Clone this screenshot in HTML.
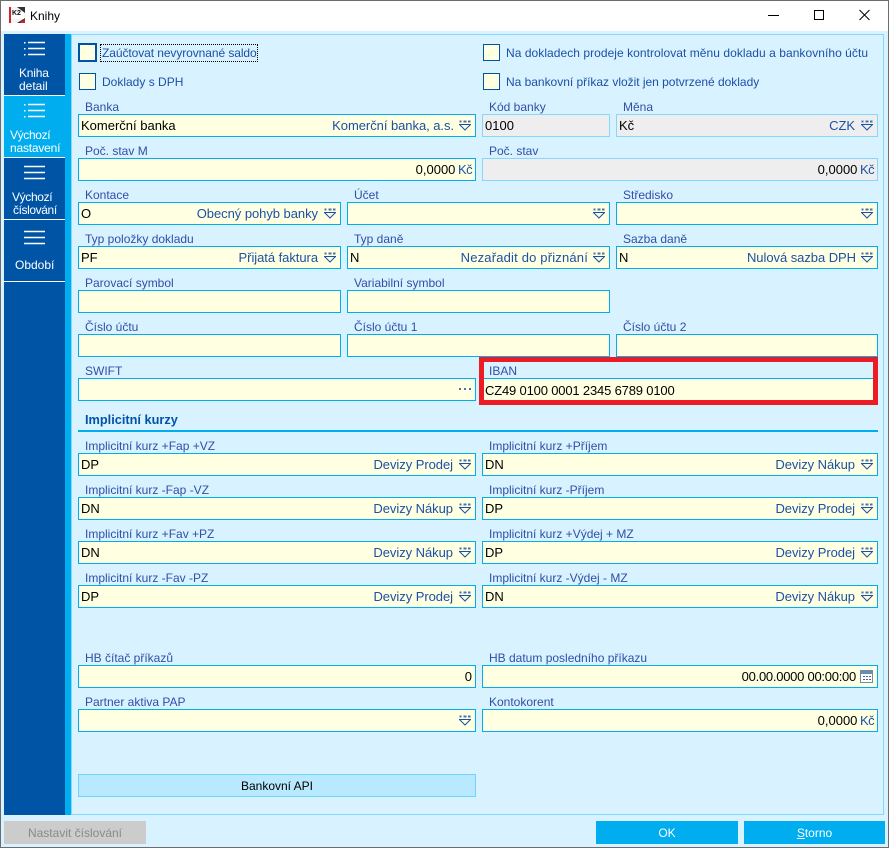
<!DOCTYPE html>
<html><head><meta charset="utf-8">
<style>
html,body{margin:0;padding:0;background:#fff}
body{width:889px;height:848px;position:relative;overflow:hidden;font:12px/16px "Liberation Sans",sans-serif;color:#000}
div,span,svg{position:absolute;box-sizing:border-box;white-space:nowrap}
.l{color:#2f4fa8;height:16px}
.f{height:23px;background:#ffffe1;border:1px solid #00aeef;font-size:13px}
.f.d{background:#eee;border-color:#84d8ff}
.t{left:2px;top:3px;color:#000}
.r{right:3px;top:3px;color:#000}
.b{color:#1c50a8;letter-spacing:-.05px}
.s{position:static;color:#1c50a8;letter-spacing:-.6px;margin-left:-1px}
.c{right:4px;top:5px;width:12px;height:12px}
.cb{width:17px;height:17px;left:0;background:#ffffe1;border:1px solid #0054a6}
.ct{color:#1c50a8;height:16px}
.side{left:4px;width:61px;height:61px;background:#0054a6;color:#fff;line-height:13px;font-size:12px}
.side svg{left:20px;width:21px;height:15px}
.btn{background:#00aeef;color:#fff;text-align:center;line-height:24px;height:23px}
</style></head><body>
<svg width="0" height="0" style="left:0;top:0"><defs>
<g id="ch"><path d="M0.500 0.500h2v2h-2zM4.500 0.500h3v2h-3zM9 0.500h2.500v2h-2.500z" fill="#4a70b0"/><path d="M0 4.500h12M0.500 4.500l5.500 5.500 5.500-5.500" fill="none" stroke="#1c50a8" stroke-width="1"/></g>
<g id="hb"><path d="M0 1.500h21M0 7.500h21M0 13.500h21" stroke="#fff" stroke-width="1.400"/></g>
<g id="hd"><path d="M4 1.500h17M4 7.500h17M4 13.500h17" stroke="#fff" stroke-width="1.400"/><path d="M0 1h1.500v1.500h-1.500zM0 7h1.500v1.500h-1.500zM0 13h1.500v1.500h-1.500z" fill="#fff"/></g>
</defs></svg>

<!-- window -->
<div style="left:0;top:0;width:889px;height:848px;background:#d9f2ff;border:1px solid #6d6d6d"></div>
<div style="left:1px;top:1px;width:887px;height:30px;background:#fff"></div>
<svg style="left:9px;top:7px" width="16" height="16"><rect width="16" height="16" fill="#f4f4f4"/><path d="M2 0h6l8 6v-6zM2 16h6l8-5v5z" fill="#333"/><path d="M11 15l5-3v4h-4z" fill="#d2232a"/><rect x="2" y="5" width="13" height="7" fill="#fff"/><rect x="0" y="0" width="2" height="16" fill="#d2232a"/></svg>
<span style="left:12px;top:10px;font:bold 7px/8px 'Liberation Sans',sans-serif;color:#111">K2</span>
<div style="left:30px;top:8px;color:#000">Knihy</div>
<svg style="left:768px;top:8px" width="110" height="16"><path d="M0 7.500h11" stroke="#000"/><rect x="46.500" y="2.500" width="9" height="9" fill="none" stroke="#000"/><path d="M91.500 2l10 10M101.500 2l-10 10" stroke="#000" fill="none"/></svg>

<!-- panel -->
<div style="left:71px;top:34px;width:813px;height:781px;border:1px solid #84d8ff;background:#d9f2ff"></div>
<div style="left:4px;top:34px;width:61px;height:781px;background:#0054a6"></div>
<div style="left:65px;top:34px;width:6px;height:781px;background:#00aeef"></div>

<div class="side" style="top:34px"><svg style="top:7px" viewBox="0 0 21 15"><use href="#hd"/></svg><span style="top:33px;left:15px;letter-spacing:-.2px">Kniha</span><span style="top:46px;left:15px">detail</span></div>
<div style="left:4px;top:95px;width:61px;height:1px;background:#fff"></div>
<div class="side" style="top:96px;background:#00aeef"><svg style="top:7px" viewBox="0 0 21 15"><use href="#hd"/></svg><span style="top:33px;left:6px;letter-spacing:-.35px">Výchozí</span><span style="top:46px;left:6px;letter-spacing:-.2px">nastavení</span></div>
<div style="left:4px;top:157px;width:61px;height:1px;background:#fff"></div>
<div class="side" style="top:158px"><svg style="top:7px" viewBox="0 0 21 15"><use href="#hb"/></svg><span style="top:33px;left:8px;letter-spacing:-.35px">Výchozí</span><span style="top:46px;left:9px;letter-spacing:-.4px">číslování</span></div>
<div style="left:4px;top:219px;width:61px;height:1px;background:#fff"></div>
<div class="side" style="top:220px"><svg style="top:10px" viewBox="0 0 21 15"><use href="#hb"/></svg><span style="top:39px;left:11px">Období</span></div>
<div style="left:4px;top:281px;width:61px;height:1px;background:#fff"></div>

<!-- checkboxes -->
<div class="cb" style="left:78px;top:43px;width:19px;height:19px;border:2px solid #0054a6"></div>
<div class="ct" style="left:101px;top:45px;width:156px;padding-left:1px;outline:1px dotted #000;letter-spacing:-.08px">Zaúčtovat nevyrovnané saldo</div>
<div class="cb" style="left:79px;top:73px"></div>
<div class="ct" style="left:102px;top:74px">Doklady s DPH</div>
<div class="cb" style="left:483px;top:44px"></div>
<div class="ct" style="left:506px;top:45px;letter-spacing:.05px">Na dokladech prodeje kontrolovat měnu dokladu a bankovního účtu</div>
<div class="cb" style="left:483px;top:73px"></div>
<div class="ct" style="left:506px;top:74px;letter-spacing:-.02px">Na bankovní příkaz vložit jen potvrzené doklady</div>

<!-- row 1 -->
<div class="l" style="left:85px;top:99px">Banka</div>
<div class="f" style="left:78px;top:114px;width:398px"><span class="t">Komerční banka</span><span class="r b" style="right:21px">Komerční banka, a.s.</span><svg class="c" viewBox="0 0 12 12"><use href="#ch"/></svg></div>
<div class="l" style="left:489px;top:99px">Kód banky</div>
<div class="f d" style="left:482px;top:114px;width:128px"><span class="t">0100</span></div>
<div class="l" style="left:623px;top:99px">Měna</div>
<div class="f d" style="left:616px;top:114px;width:262px"><span class="t">Kč</span><span class="r b" style="right:22px">CZK</span><svg class="c" viewBox="0 0 12 12"><use href="#ch"/></svg></div>

<!-- row 2 -->
<div class="l" style="left:85px;top:143px">Poč. stav M</div>
<div class="f" style="left:78px;top:158px;width:398px"><span class="r">0,0000 <span class="s">Kč</span></span></div>
<div class="l" style="left:489px;top:143px">Poč. stav</div>
<div class="f d" style="left:482px;top:158px;width:396px"><span class="r">0,0000 <span class="s">Kč</span></span></div>

<!-- row 3 -->
<div class="l" style="left:85px;top:187px">Kontace</div>
<div class="f" style="left:78px;top:202px;width:263px"><span class="t">O</span><span class="r b" style="right:22px">Obecný pohyb banky</span><svg class="c" viewBox="0 0 12 12"><use href="#ch"/></svg></div>
<div class="l" style="left:354px;top:187px">Účet</div>
<div class="f" style="left:347px;top:202px;width:263px"><svg class="c" viewBox="0 0 12 12"><use href="#ch"/></svg></div>
<div class="l" style="left:623px;top:187px">Středisko</div>
<div class="f" style="left:616px;top:202px;width:262px"><svg class="c" viewBox="0 0 12 12"><use href="#ch"/></svg></div>

<!-- row 4 -->
<div class="l" style="left:85px;top:231px">Typ položky dokladu</div>
<div class="f" style="left:78px;top:246px;width:263px"><span class="t">PF</span><span class="r b" style="right:22px">Přijatá faktura</span><svg class="c" viewBox="0 0 12 12"><use href="#ch"/></svg></div>
<div class="l" style="left:354px;top:231px">Typ daně</div>
<div class="f" style="left:347px;top:246px;width:263px"><span class="t">N</span><span class="r b" style="right:21px;letter-spacing:.18px">Nezařadit do přiznání</span><svg class="c" viewBox="0 0 12 12"><use href="#ch"/></svg></div>
<div class="l" style="left:623px;top:231px">Sazba daně</div>
<div class="f" style="left:616px;top:246px;width:262px"><span class="t">N</span><span class="r b" style="right:21px">Nulová sazba DPH</span><svg class="c" viewBox="0 0 12 12"><use href="#ch"/></svg></div>

<!-- row 5 -->
<div class="l" style="left:85px;top:275px">Parovací symbol</div>
<div class="f" style="left:78px;top:290px;width:263px"></div>
<div class="l" style="left:354px;top:275px">Variabilní symbol</div>
<div class="f" style="left:347px;top:290px;width:263px"></div>

<!-- row 6 -->
<div class="l" style="left:85px;top:319px">Číslo účtu</div>
<div class="f" style="left:78px;top:334px;width:263px"></div>
<div class="l" style="left:354px;top:319px">Číslo účtu 1</div>
<div class="f" style="left:347px;top:334px;width:263px"></div>
<div class="l" style="left:623px;top:319px">Číslo účtu 2</div>
<div class="f" style="left:616px;top:334px;width:262px"></div>

<!-- row 7 -->
<div class="l" style="left:85px;top:363px">SWIFT</div>
<div class="f" style="left:78px;top:378px;width:398px"><svg style="left:380px;top:9px" width="13" height="3"><path d="M0 0h2v2h-2zM5 0h2v2h-2zM10 0h2v2h-2z" fill="#4a70b0"/></svg></div>
<div class="l" style="left:489px;top:363px">IBAN</div>
<div class="f" style="left:482px;top:378px;width:396px;border-width:1px 0 0 0;height:25px"><span class="t" style="left:3px;top:4px;letter-spacing:-.17px">CZ49 0100 0001 2345 6789 0100</span></div>
<div style="left:479px;top:357px;width:399px;height:48px;border:5px solid #ed1c24"></div>

<!-- Implicitní kurzy -->
<div style="left:85px;top:412px;font-weight:bold;font-size:12.750px;color:#0054a6">Implicitní kurzy</div>
<div style="left:78px;top:430px;width:800px;height:2px;background:#00aeef"></div>

<div class="l" style="left:85px;top:438px">Implicitní kurz +Fap +VZ</div>
<div class="f" style="left:78px;top:453px;width:398px"><span class="t">DP</span><span class="r b" style="right:22px">Devizy Prodej</span><svg class="c" viewBox="0 0 12 12"><use href="#ch"/></svg></div>
<div class="l" style="left:489px;top:438px">Implicitní kurz +Příjem</div>
<div class="f" style="left:482px;top:453px;width:396px"><span class="t">DN</span><span class="r b" style="right:22px">Devizy Nákup</span><svg class="c" viewBox="0 0 12 12"><use href="#ch"/></svg></div>

<div class="l" style="left:85px;top:482px">Implicitní kurz -Fap -VZ</div>
<div class="f" style="left:78px;top:497px;width:398px"><span class="t">DN</span><span class="r b" style="right:22px">Devizy Nákup</span><svg class="c" viewBox="0 0 12 12"><use href="#ch"/></svg></div>
<div class="l" style="left:489px;top:482px">Implicitní kurz -Příjem</div>
<div class="f" style="left:482px;top:497px;width:396px"><span class="t">DP</span><span class="r b" style="right:22px">Devizy Prodej</span><svg class="c" viewBox="0 0 12 12"><use href="#ch"/></svg></div>

<div class="l" style="left:85px;top:526px">Implicitní kurz +Fav +PZ</div>
<div class="f" style="left:78px;top:541px;width:398px"><span class="t">DN</span><span class="r b" style="right:22px">Devizy Nákup</span><svg class="c" viewBox="0 0 12 12"><use href="#ch"/></svg></div>
<div class="l" style="left:489px;top:526px">Implicitní kurz +Výdej + MZ</div>
<div class="f" style="left:482px;top:541px;width:396px"><span class="t">DP</span><span class="r b" style="right:22px">Devizy Prodej</span><svg class="c" viewBox="0 0 12 12"><use href="#ch"/></svg></div>

<div class="l" style="left:85px;top:570px">Implicitní kurz -Fav -PZ</div>
<div class="f" style="left:78px;top:585px;width:398px"><span class="t">DP</span><span class="r b" style="right:22px">Devizy Prodej</span><svg class="c" viewBox="0 0 12 12"><use href="#ch"/></svg></div>
<div class="l" style="left:489px;top:570px">Implicitní kurz -Výdej - MZ</div>
<div class="f" style="left:482px;top:585px;width:396px"><span class="t">DN</span><span class="r b" style="right:22px">Devizy Nákup</span><svg class="c" viewBox="0 0 12 12"><use href="#ch"/></svg></div>

<!-- lower -->
<div class="l" style="left:85px;top:650px">HB čítač příkazů</div>
<div class="f" style="left:78px;top:665px;width:398px"><span class="r">0</span></div>
<div class="l" style="left:489px;top:650px">HB datum posledního příkazu</div>
<div class="f" style="left:482px;top:665px;width:396px"><span class="r" style="right:21px;letter-spacing:-.26px">00.00.0000 00:00:00</span>
<svg style="right:4px;top:3px" width="13" height="14"><rect x="0.500" y="1.500" width="12" height="12" fill="#fff" stroke="#6c8cb0"/><rect x="0" y="1" width="13" height="4" fill="#6c8cb0"/><path d="M3 7h2v1h-2zM6 7h2v1h-2zM9 7h2v1h-2zM3 10h2v1h-2zM6 10h2v1h-2zM9 10h2v1h-2z" fill="#567"/></svg></div>
<div class="l" style="left:85px;top:694px">Partner aktiva PAP</div>
<div class="f" style="left:78px;top:709px;width:398px"><svg class="c" viewBox="0 0 12 12"><use href="#ch"/></svg></div>
<div class="l" style="left:489px;top:694px">Kontokorent</div>
<div class="f" style="left:482px;top:709px;width:396px"><span class="r">0,0000 <span class="s">Kč</span></span></div>

<div style="left:78px;top:774px;width:398px;height:23px;background:#b9e9ff;border:1px solid #6fd3ff;text-align:center;line-height:22px;color:#000">Bankovní API</div>

<!-- bottom buttons -->
<div class="btn" style="left:4px;top:821px;width:142px;background:#ccc;color:#8a8a8a">Nastavit číslování</div>
<div class="btn" style="left:596px;top:821px;width:142px">OK</div>
<div class="btn" style="left:744px;top:821px;width:141px"><u>S</u>torno</div>
</body></html>
